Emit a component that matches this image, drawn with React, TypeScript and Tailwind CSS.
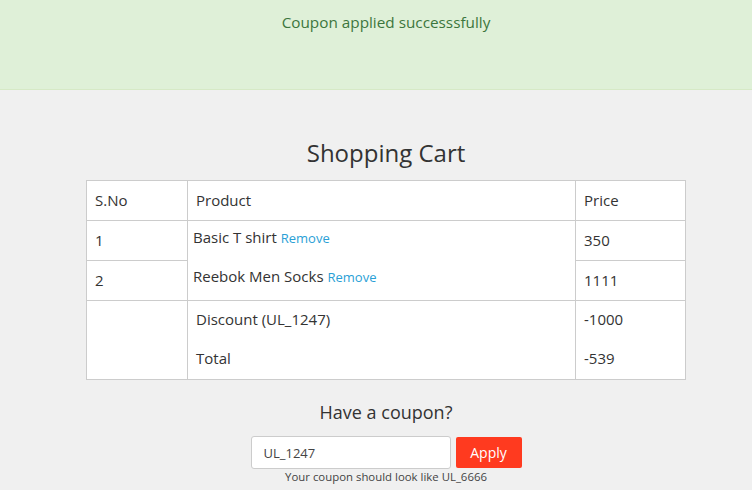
import React from "react";

const items = [
  { id: 1, name: "Basic T shirt", price: 350 },
  { id: 2, name: "Reebok Men Socks", price: 1111 },
];

export default function App() {
  return (
    <div className="min-h-[490px] bg-[#f0f0f0] text-[#333] font-['Open_Sans','Lato',sans-serif]">
      {/* alert */}
      <div className="h-[90px] bg-[#dff0d8] border-b border-[#d6e9c6] pt-[11px] pl-[20px] text-center text-[15.3px] text-[#3c763d]">
        Coupon applied successsfully
      </div>

      <div className="ml-[86px] w-[600px]">
        <h2 className="mt-[49px] h-[41px] text-center text-[24px] leading-[28px]">Shopping Cart</h2>

        <table className="w-full border-collapse bg-white text-[15px]">
          <thead>
            <tr className="h-[40px]">
              <th className="w-[101px] border border-[#ccc] px-[8px] text-left font-normal">S.No</th>
              <th className="border border-[#ccc] px-[8px] text-left font-normal">Product</th>
              <th className="w-[110px] border border-[#ccc] px-[8px] text-left font-normal">Price</th>
            </tr>
          </thead>
          <tbody>
            <tr className="h-[40px]">
              <td className="border border-[#ccc] px-[8px]">1</td>
              <td rowSpan={2} className="border border-[#ccc] px-[5px] align-top">
                {items.map((it) => (
                  <div key={it.id} className="h-[39px] pt-[5px]">
                    {it.name} <span className="text-[13px] text-[#2a9fd6]">Remove</span>
                  </div>
                ))}
              </td>
              <td className="border border-[#ccc] px-[8px]">350</td>
            </tr>
            <tr className="h-[40px]">
              <td className="border border-[#ccc] px-[8px]">2</td>
              <td className="border border-[#ccc] px-[8px]">1111</td>
            </tr>
            <tr className="h-[79px]">
              <td className="border border-[#ccc]"></td>
              <td className="border border-[#ccc] px-[8px] align-top">
                <div className="h-[39px] pt-[7px]">Discount (UL_1247)</div>
                <div className="h-[39px] pt-[7px]">Total</div>
              </td>
              <td className="border border-[#ccc] px-[8px] align-top">
                <div className="h-[39px] pt-[7px]">-1000</div>
                <div className="h-[39px] pt-[7px]">-539</div>
              </td>
            </tr>
          </tbody>
        </table>

        {/* coupon */}
        <div className="mt-[21px] flex flex-col items-center">
          <div className="text-[18px] leading-[22px]">Have a coupon?</div>
          <div className="mt-[13px] flex items-center gap-[5px]">
            <input
              defaultValue="UL_1247"
              className="h-[33px] w-[200px] rounded-[3px] border border-[#ccc] bg-white px-[12px] text-[13px] text-[#444] outline-none"
            />
            <button className="h-[31px] w-[66px] rounded-[2px] bg-[#ff3a1f] text-[14px] text-white">Apply</button>
          </div>
          <div className="text-[11.4px] leading-[15px] text-[#444]">Your coupon should look like UL_6666</div>
        </div>
      </div>
    </div>
  );
}
